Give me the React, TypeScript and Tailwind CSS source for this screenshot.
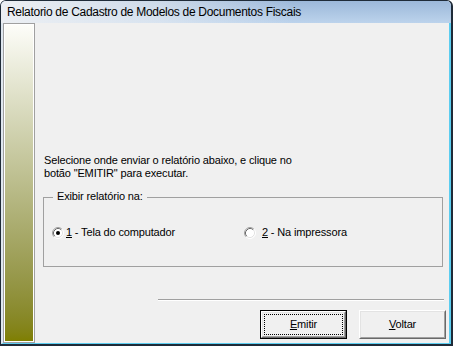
import React from "react";

function Radio({ checked }: { checked?: boolean }) {
  return (
    <svg width="12" height="12" viewBox="0 0 12 12" className="shrink-0">
      <circle cx="6" cy="6" r="5" fill="#ffffff" />
      <path d="M9.89 2.11 A5.5 5.5 0 0 0 2.11 9.89" fill="none" stroke="#a0a0a0" strokeWidth="1" />
      <path d="M2.11 9.89 A5.5 5.5 0 0 0 9.89 2.11" fill="none" stroke="#ffffff" strokeWidth="1" />
      <path d="M9.18 2.82 A4.5 4.5 0 0 0 2.82 9.18" fill="none" stroke="#696969" strokeWidth="1" />
      <path d="M2.82 9.18 A4.5 4.5 0 0 0 9.18 2.82" fill="none" stroke="#e3e3e3" strokeWidth="1" />
      {checked && <circle cx="6" cy="6" r="2" fill="#000000" />}
    </svg>
  );
}

function Button({ children, focused }: { children: React.ReactNode; focused?: boolean }) {
  const face = (
    <div className="flex h-full w-full border border-t-white border-l-white border-r-[#696969] border-b-[#696969]">
      <div className="flex h-full w-full border border-t-[#e3e3e3] border-l-[#e3e3e3] border-r-[#a0a0a0] border-b-[#a0a0a0] p-[1px]">
        <div
          className={
            "flex h-full w-full items-center justify-center border border-dotted " +
            (focused ? "border-black" : "border-transparent")
          }
        >
          {children}
        </div>
      </div>
    </div>
  );
  return (
    <div className={"h-[29px] w-[87px] bg-[#f0f0f0] " + (focused ? "border border-black" : "")}>
      {face}
    </div>
  );
}

export default function App() {
  return (
    <div className="h-[346px] w-[453px] bg-white font-['Liberation_Sans',Arial,sans-serif] text-black">
      <div className="flex h-full w-full flex-col overflow-hidden rounded-t-[6px] border-t border-r-2 border-b-2 border-l border-[#1f2b38] bg-[#f0f0f0]">
        <div className="h-[22px] shrink-0 bg-[linear-gradient(to_right,rgba(236,239,243,1)_0%,rgba(236,239,243,0.6)_35%,rgba(236,239,243,0)_65%),linear-gradient(to_bottom,#9cb8d9,#bcd3ec)] pl-[6px] text-[12px] leading-[22px] tracking-[-0.3px]">
          Relatorio de Cadastro de Modelos de Documentos Fiscais
        </div>
        <div className="flex min-h-0 flex-1 border-r-2 border-b border-l-2 border-r-[#5ccdf0] border-b-[#5ccdf0] border-l-[#dfe7ef]">
          <div className="w-[32px] shrink-0 border border-[#a0a0a0]">
            <div className="h-full border border-white bg-linear-to-b from-[#fdfdf9] to-[#7f7f00]" />
          </div>
          <div className="flex flex-1 flex-col text-[11px] leading-[13px] tracking-[-0.15px]">
            <p className="mt-[131px] pl-[9px]">
              Selecione onde enviar o relatório abaixo, e clique no
              <br />
              botão "EMITIR" para executar.
            </p>
            <div className="relative mt-[17px] ml-[8px] h-[70px] w-[400px] border border-[#a0a0a0]">
              <span className="absolute top-[-8px] left-[9px] bg-[#f0f0f0] px-[4px]">Exibir relatório na:</span>
              <div className="flex items-center pt-[28px] pl-[8px]">
                <div className="flex w-[192px] items-center gap-[2px]">
                  <Radio checked />
                  <span>
                    <span className="underline">1</span> - Tela do computador
                  </span>
                </div>
                <div className="flex items-center gap-[6px]">
                  <Radio />
                  <span>
                    <span className="underline">2</span> - Na impressora
                  </span>
                </div>
              </div>
            </div>
            <div className="mt-[32px] ml-[123px] w-[286px] border-t border-b border-t-[#a0a0a0] border-b-white" />
            <div className="mt-[9px] flex justify-end gap-[12px] pr-[3px]">
              <Button focused>
                <span>
                  <span className="underline">E</span>mitir
                </span>
              </Button>
              <Button>
                <span>
                  <span className="underline">V</span>oltar
                </span>
              </Button>
            </div>
          </div>
        </div>
      </div>
    </div>
  );
}
